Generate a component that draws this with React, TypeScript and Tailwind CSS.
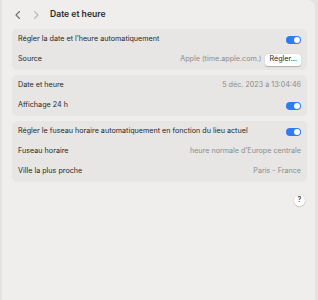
import React from "react";

const Toggle: React.FC = () => (
  <div className="relative h-[8px] w-[15px] rounded-full bg-[#2f7bf5]">
    <div className="absolute right-[1px] top-[1px] h-[6px] w-[6px] rounded-full bg-white" />
  </div>
);

const Row: React.FC<{ label: string; children?: React.ReactNode }> = ({ label, children }) => (
  <div className="flex h-[20px] items-center justify-between px-[6px]">
    <span className="text-[#262626]">{label}</span>
    <div className="flex items-center gap-[4px]">{children}</div>
  </div>
);

const Value: React.FC<{ text: string }> = ({ text }) => (
  <span className="text-[#8b8b8a]">{text}</span>
);

const App: React.FC = () => {
  return (
    <div
      className="h-[300px] w-[318px] bg-[#e3e3e2] pl-[2px] pr-[3px]"
      style={{ fontFamily: "Inter, 'Noto Sans', sans-serif" }}
    >
      <div className="h-full rounded-tr-[8px] bg-[#efeeec] text-[7.2px]">
        {/* header */}
        <div className="flex h-[29px] items-center gap-[10px] pl-[12px]">
          <svg width="8" height="10" viewBox="0 0 8 10" fill="none">
            <path d="M5.5 1.5 2 5l3.5 3.5" stroke="#6e6e6e" strokeWidth="1.1" strokeLinecap="round" strokeLinejoin="round" />
          </svg>
          <svg width="8" height="10" viewBox="0 0 8 10" fill="none">
            <path d="M2.5 1.5 6 5 2.5 8.5" stroke="#b8b8b8" strokeWidth="1.1" strokeLinecap="round" strokeLinejoin="round" />
          </svg>
          <span className="text-[8.6px] font-semibold text-[#2a2a2a]">Date et heure</span>
        </div>

        <div className="flex flex-col gap-[5px] pl-[10px] pr-[8px]">
          <div className="rounded-[5px] bg-[#e7e6e4] py-[0.5px]">
            <Row label="Régler la date et l’heure automatiquement">
              <Toggle />
            </Row>
            <Row label="Source">
              <Value text="Apple (time.apple.com.)" />
              <div className="flex h-[12px] items-center rounded-[3px] bg-white px-[4px] text-[#262626] shadow-[0_0.5px_1px_rgba(0,0,0,0.25)]">
                Régler…
              </div>
            </Row>
          </div>

          <div className="rounded-[5px] bg-[#e7e6e4] py-[0.5px]">
            <Row label="Date et heure">
              <Value text="5 déc. 2023 à 13:04:46" />
            </Row>
            <Row label="Affichage 24 h">
              <Toggle />
            </Row>
          </div>

          <div className="rounded-[5px] bg-[#e7e6e4] py-[0.5px]">
            <Row label="Régler le fuseau horaire automatiquement en fonction du lieu actuel">
              <Toggle />
            </Row>
            <Row label="Fuseau horaire">
              <Value text="heure normale d’Europe centrale" />
            </Row>
            <Row label="Ville la plus proche">
              <Value text="Paris - France" />
            </Row>
          </div>

          <div className="flex justify-end pr-[2px] pt-[8px]">
            <div className="flex h-[11px] w-[11px] items-center justify-center rounded-full bg-white text-[7px] font-semibold text-[#444] shadow-[0_0.5px_1.5px_rgba(0,0,0,0.3)]">
              ?
            </div>
          </div>
        </div>
      </div>
    </div>
  );
};

export default App;
